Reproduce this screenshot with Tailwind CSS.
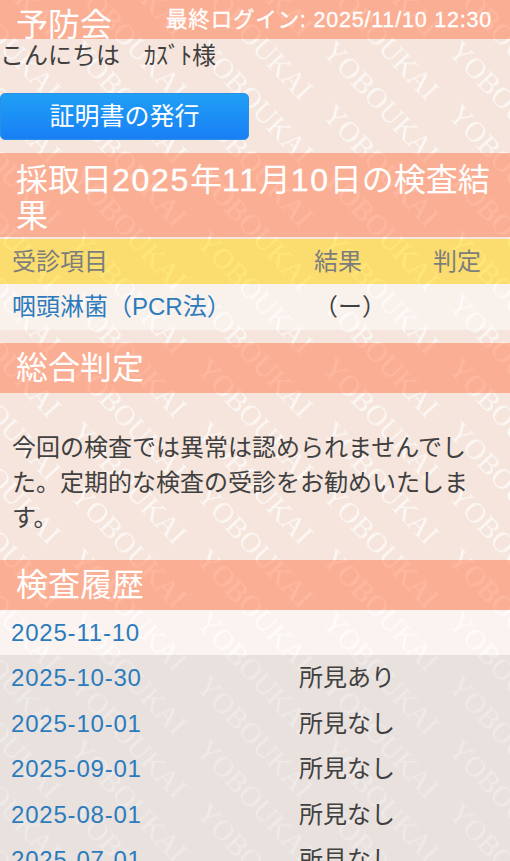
<!DOCTYPE html>
<html lang="ja">
<head>
<meta charset="utf-8">
<title>予防会</title>
<script src="https://cdn.jsdelivr.net/npm/@tailwindcss/browser@4"></script>
</head>
<body class="h-[861px] overflow-hidden bg-[#f5e5dc] text-[#404040] font-['Liberation_Sans','Noto_Sans_CJK_JP',sans-serif]">
<div class="relative h-[861px] overflow-hidden">

    <!-- watermark sits behind the translucent sections -->
    <svg class="absolute inset-0" width="510" height="861">
        <defs>
            <text id="wm-text" font-family="Liberation Serif" font-size="29" fill="#fff" fill-opacity="0.68">YOBOUKAI</text>
            <pattern id="wm" width="126" height="63.5" patternUnits="userSpaceOnUse">
                <use href="#wm-text" transform="translate(69 52) rotate(47)"/>
                <use href="#wm-text" transform="translate(-57 52) rotate(47)"/>
                <use href="#wm-text" transform="translate(69 -11.5) rotate(47)"/>
                <use href="#wm-text" transform="translate(-57 -11.5) rotate(47)"/>
                <use href="#wm-text" transform="translate(69 -75) rotate(47)"/>
                <use href="#wm-text" transform="translate(-57 -75) rotate(47)"/>
                <use href="#wm-text" transform="translate(69 -138.5) rotate(47)"/>
                <use href="#wm-text" transform="translate(-57 -138.5) rotate(47)"/>
            </pattern>
        </defs>
        <rect width="510" height="861" fill="url(#wm)"/>
    </svg>

    <div class="relative">
        <header class="flex h-[39px] justify-between overflow-hidden bg-[#ff794c]/50 text-white">
            <h1 class="pl-[16px] text-[32px] leading-[50px]">予防会</h1>
            <p class="pr-[18px] text-[21.5px] leading-[41px] tracking-[0.8px] [-webkit-text-stroke:0.3px_white]">最終ログイン: 2025/11/10 12:30</p>
        </header>

        <p class="h-[54px] text-[24px] leading-[33px]">こんにちは　ｶｽﾞﾄ様</p>

        <button class="block h-[47px] w-[249px] rounded-[5px] border border-[#2b8fe8] bg-gradient-to-b from-[#209ff5] to-[#1a7ff5] text-center text-[25px] text-white">証明書の発行</button>

        <h2 class="mt-[13px] h-[84px] bg-[#ff794c]/50 px-[16px] pt-[9px] text-[32px] leading-[36px] text-white">採取日<span class="tracking-[1.7px] [-webkit-text-stroke:0.4px_white]">2025</span>年<span class="tracking-[1.7px] [-webkit-text-stroke:0.4px_white]">11</span>月<span class="tracking-[1.7px] [-webkit-text-stroke:0.4px_white]">10</span>日の検査結果</h2>

        <table class="mt-[2px] w-full table-fixed border-collapse text-[24px]">
            <thead>
                <tr class="h-[45px] bg-[#ffd500]/50 text-[#7d7d7d]">
                    <th class="pl-[12px] text-left font-normal">受診項目</th>
                    <th class="w-[119px] text-left font-normal">結果</th>
                    <th class="w-[77px] text-left font-normal">判定</th>
                </tr>
            </thead>
            <tbody>
                <tr class="h-[46px] bg-white/45">
                    <td class="pl-[12px] text-[#2b7bbd] whitespace-nowrap">咽頭淋菌（PCR法）</td>
                    <td class="whitespace-nowrap">（ー）</td>
                    <td></td>
                </tr>
            </tbody>
        </table>

        <h2 class="mt-[13px] h-[50px] bg-[#ff794c]/50 pl-[16px] text-[32px] leading-[50px] text-white">総合判定</h2>
        <p class="h-[167px] px-[12px] pt-[37px] text-[24px] leading-[35px]">今回の検査では異常は認められませんでした。定期的な検査の受診をお勧めいたします。</p>

        <h2 class="h-[50px] bg-[#ff794c]/50 pl-[16px] text-[32px] leading-[50px] text-white">検査履歴</h2>
        <table class="w-full border-collapse text-[24px]">
            <tbody>
                <tr class="h-[45px] bg-white/55"><td class="w-[299px] pl-[11px] text-[#2b7bbd] tracking-[0.8px]">2025-11-10</td><td></td></tr>
                <tr class="h-[46px] bg-[#dddddd]/50"><td class="pl-[11px] text-[#2b7bbd] tracking-[0.8px]">2025-10-30</td><td>所見あり</td></tr>
                <tr class="h-[45px] bg-[#dddddd]/50"><td class="pl-[11px] text-[#2b7bbd] tracking-[0.8px]">2025-10-01</td><td>所見なし</td></tr>
                <tr class="h-[46px] bg-[#dddddd]/50"><td class="pl-[11px] text-[#2b7bbd] tracking-[0.8px]">2025-09-01</td><td>所見なし</td></tr>
                <tr class="h-[45px] bg-[#dddddd]/50"><td class="pl-[11px] text-[#2b7bbd] tracking-[0.8px]">2025-08-01</td><td>所見なし</td></tr>
                <tr class="h-[46px] bg-[#dddddd]/50"><td class="pl-[11px] text-[#2b7bbd] tracking-[0.8px]">2025-07-01</td><td>所見なし</td></tr>
            </tbody>
        </table>
    </div>
</div>
</body>
</html>
